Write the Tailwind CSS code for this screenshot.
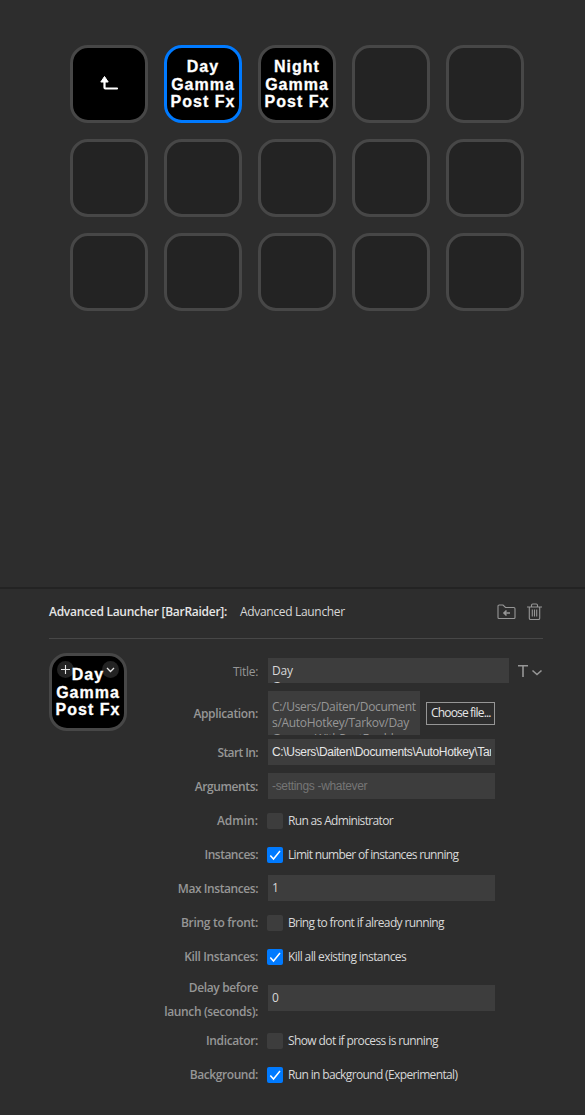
<!DOCTYPE html>
<html lang="en">
<head>
<meta charset="utf-8">
<title>Advanced Launcher</title>
<script src="https://cdn.jsdelivr.net/npm/@tailwindcss/browser@4"></script>
</head>
<body class="w-[585px] h-[1115px] overflow-hidden bg-[#2d2d2d] font-['Open_Sans','Noto_Sans',sans-serif] text-[12px] text-[#d8d8d8]">
<main class="flex h-full flex-col">
  <section class="h-[587px] shrink-0 pt-[45px] pl-[70px]">
    <div class="grid w-[454px] grid-cols-5 gap-4 *:h-[78px] *:rounded-[18px] *:border-3 *:border-[#474747] *:bg-[#232323]">
      <div class="flex items-center justify-center bg-black!">
        <svg class="size-[22px]" viewBox="0 0 22 22" fill="none"><path d="M6.500 9v5.600q0 .9.9.9H19" stroke="#fff" stroke-width="2.200" stroke-linecap="round"/><path d="M6.500 3.500 2.800 9h7.400z" fill="#fff" stroke="#fff" stroke-linejoin="round"/></svg>
      </div>
      <div class="border-[#007aff]! bg-black! pt-[10px] text-center font-['Liberation_Sans',sans-serif] text-[16px] leading-[17.6px] font-bold tracking-[1px] whitespace-nowrap text-white [-webkit-text-stroke:0.3px_white]"><p>Day</p><p>Gamma</p><p>Post Fx</p></div>
      <div class="bg-black! pt-[10px] text-center font-['Liberation_Sans',sans-serif] text-[16px] leading-[17.6px] font-bold tracking-[1px] whitespace-nowrap text-white [-webkit-text-stroke:0.3px_white]"><p>Night</p><p>Gamma</p><p>Post Fx</p></div>
      <div></div><div></div>
      <div></div><div></div><div></div><div></div><div></div>
      <div></div><div></div><div></div><div></div><div></div>
    </div>
  </section>
  <section class="flex-1 border-t-2 border-[#232323] px-[49px]">
    <header class="flex h-[50px] w-[494px] items-center border-b border-[#474747] pb-[3px]">
      <h1 class="w-[191px] font-semibold tracking-[-0.27px] whitespace-nowrap text-[#e6e6e6]">Advanced Launcher [BarRaider]:</h1>
      <span class="flex-1 tracking-[-0.32px]">Advanced Launcher</span>
      <svg class="mr-[11px] mb-px h-[16px] w-[19px]" viewBox="0 0 19 16" fill="none" stroke="#969696" stroke-width="1.100"><path d="M1 13.500V2.200Q1 1 2.200 1H6l2.500 2.500h8.300q1.200 0 1.200 1.200v8.800q0 1-1 1H2q-1 0-1-1z"/><path d="M13 9H7M9.500 6.500 7 9l2.500 2.500" stroke-width="1.600"/></svg>
      <svg class="mr-px mb-[2px] h-[17px] w-[15px]" viewBox="0 0 15 17" fill="none" stroke="#969696" stroke-width="1.100"><path d="M0 4h15M4.500 4V2.300Q4.500 1 5.800 1h3.400q1.300 0 1.300 1.300V4M2.300 4v11.200q0 1.300 1.300 1.300h7.800q1.300 0 1.300-1.300V4M5.300 6.500v7M7.500 6.500v7M9.700 6.500v7"/></svg>
    </header>
    <div class="flex">
      <div class="relative mt-[14px] h-[78px] w-[78px] shrink-0 rounded-[18px] border-3 border-[#474747] bg-black pt-[10px] text-center font-['Liberation_Sans',sans-serif] text-[16px] leading-[17.6px] font-bold tracking-[1px] whitespace-nowrap text-white [-webkit-text-stroke:0.3px_white]">
        <svg class="absolute top-[5px] left-[5px] size-[17px]" viewBox="0 0 17 17"><circle cx="8.500" cy="8.500" r="8.500" fill="#232323"/><path d="M4 8.500h9M8.500 4v9" stroke="#e6e6e6" stroke-width="1.100"/></svg>
        <svg class="absolute top-[5px] left-[50px] size-[17px]" viewBox="0 0 17 17" fill="none"><circle cx="8.500" cy="8.500" r="8.500" fill="#232323"/><path d="m5 7 3.500 3.500L12 7" stroke="#e6e6e6" stroke-width="1.300"/></svg>
        <div class="relative"><p>Day</p><p>Gamma</p><p>Post Fx</p></div>
      </div>
      <form class="w-[416px] pt-[19px] *:flex *:items-center [&_label]:w-[131px] [&_label]:pt-[2px] [&_label]:text-right [&_label]:text-[#969696]">
        <div class="h-[25px]"><label class="tracking-[-0.3px]">Title:</label><div class="ml-[10px] h-[25px] w-[241px] overflow-hidden bg-[#3d3d3d] pt-[5px] pl-1 leading-[16px] tracking-[-0.2px]"><p>Day</p><p>Gamma</p></div>
          <svg class="ml-[9px] h-[14px] w-[25px]" viewBox="0 0 25 14" fill="none" stroke="#969696" stroke-width="1.600"><path d="M0 1.700h10M5 1.700v11.300M14.500 6.500l4.500 4 4.500-4"/></svg></div>
        <div class="mt-2 h-[44px]"><label class="font-semibold tracking-[-0.35px]">Application:</label><div class="ml-[10px] h-[44px] w-[152px] overflow-hidden bg-[#3d3d3d] pt-[8px] pl-1 leading-[16px] tracking-[-0.3px] whitespace-nowrap text-[#969696]"><p>C:/Users/Daiten/Document</p><p>s/AutoHotkey/Tarkov/Day</p><p>GammaWithPostFx.ahk</p></div><button type="button" class="ml-[6px] h-[23px] w-[69px] border border-[#969696] pl-1 text-left tracking-[-0.83px] whitespace-nowrap text-[#e6e6e6]">Choose file...</button></div>
        <div class="h-[34px]"><label class="font-semibold tracking-[-0.6px]">Start In:</label><div class="ml-[10px] h-[26px] w-[227px] bg-[#3d3d3d] px-1 font-['Liberation_Sans',sans-serif] leading-[26px] tracking-[-0.33px] text-[#e6e6e6]"><p class="overflow-hidden whitespace-nowrap">C:\Users\Daiten\Documents\AutoHotkey\Tarkov</p></div></div>
        <div class="h-[34px]"><label class="font-semibold tracking-[-0.4px]">Arguments:</label><div class="ml-[10px] h-[26px] w-[227px] bg-[#3d3d3d] px-1 font-['Liberation_Sans',sans-serif] leading-[26px] tracking-[-0.32px] text-[#757575]">-settings -whatever</div></div>
        <div class="h-[34px]"><label class="font-semibold">Admin:</label><i class="mt-[2px] ml-[9px] size-4 rounded-[2px] bg-[#3d3d3d]"></i><span class="ml-[5px] pt-px tracking-[-0.66px]">Run as Administrator</span></div>
        <div class="h-[34px]"><label class="font-semibold tracking-[-0.5px]">Instances:</label><svg class="mt-[2px] ml-[9px] size-4 rounded-[2px] bg-[#007aff]" viewBox="0 0 16 16" fill="none" stroke="#fff" stroke-width="1.500"><path d="m3.300 8.500 3.200 3.500 6.500-8"/></svg><span class="ml-[5px] pt-px tracking-[-0.68px]">Limit number of instances running</span></div>
        <div class="h-[34px]"><label class="font-semibold tracking-[-0.43px]">Max Instances:</label><div class="ml-[10px] h-[26px] w-[227px] bg-[#3d3d3d] px-1 leading-[26px]">1</div></div>
        <div class="h-[34px]"><label class="font-semibold tracking-[-0.3px]">Bring to front:</label><i class="mt-[2px] ml-[9px] size-4 rounded-[2px] bg-[#3d3d3d]"></i><span class="ml-[5px] pt-px tracking-[-0.63px]">Bring to front if already running</span></div>
        <div class="h-[34px]"><label class="font-semibold tracking-[-0.37px]">Kill Instances:</label><svg class="mt-[2px] ml-[9px] size-4 rounded-[2px] bg-[#007aff]" viewBox="0 0 16 16" fill="none" stroke="#fff" stroke-width="1.500"><path d="m3.300 8.500 3.200 3.500 6.500-8"/></svg><span class="ml-[5px] pt-px tracking-[-0.59px]">Kill all existing instances</span></div>
        <div class="h-[50px]"><label class="pt-[4px]! leading-[24px] font-semibold tracking-[-0.38px]">Delay before<br>launch (seconds):</label><div class="ml-[10px] h-[26px] w-[227px] bg-[#3d3d3d] px-1 leading-[26px]">0</div></div>
        <div class="h-[34px]"><label class="font-semibold tracking-[-0.35px]">Indicator:</label><i class="mt-[2px] ml-[9px] size-4 rounded-[2px] bg-[#3d3d3d]"></i><span class="ml-[5px] pt-px tracking-[-0.6px]">Show dot if process is running</span></div>
        <div class="h-[34px]"><label class="font-semibold tracking-[-0.41px]">Background:</label><svg class="mt-[2px] ml-[9px] size-4 rounded-[2px] bg-[#007aff]" viewBox="0 0 16 16" fill="none" stroke="#fff" stroke-width="1.500"><path d="m3.300 8.500 3.200 3.500 6.500-8"/></svg><span class="ml-[5px] pt-px tracking-[-0.64px]">Run in background (Experimental)</span></div>
      </form>
    </div>
  </section>
</main>
</body>
</html>
